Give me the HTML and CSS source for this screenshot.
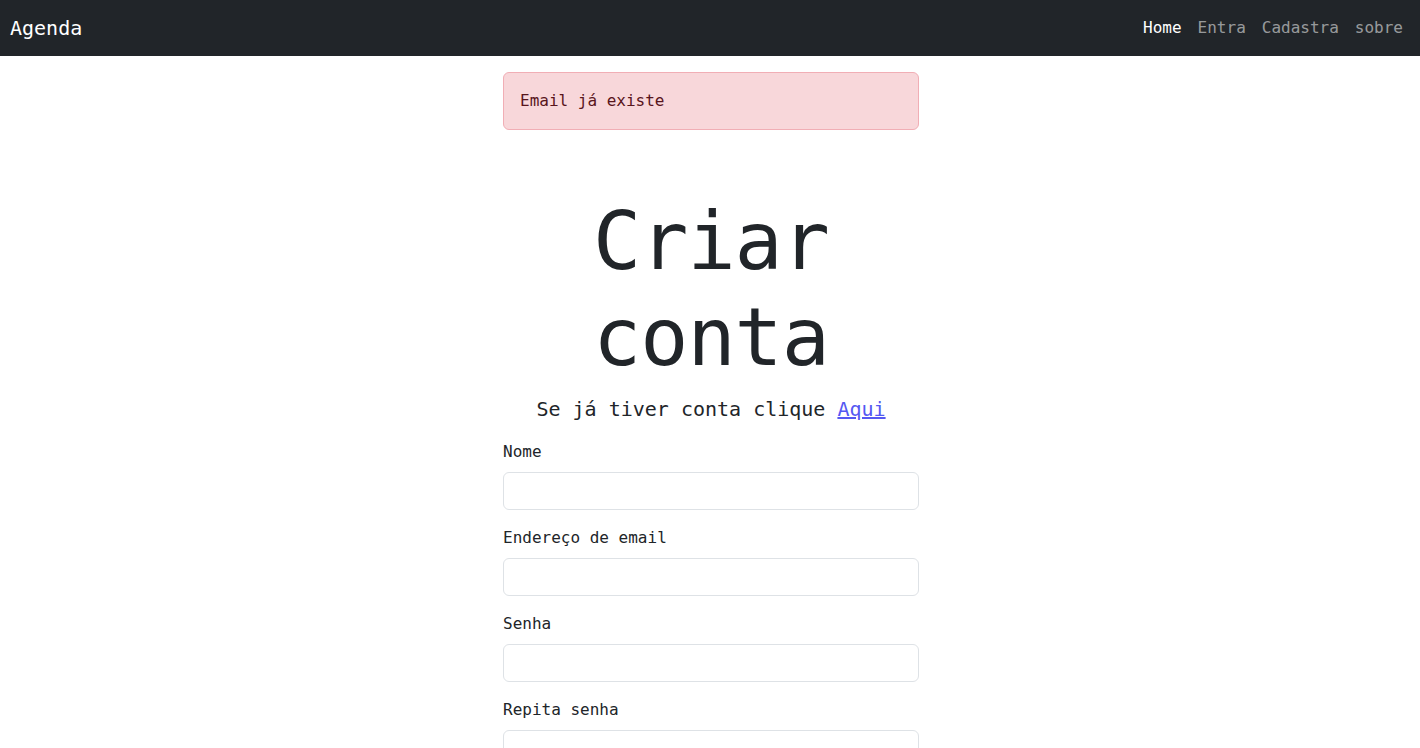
FILE: index.html
```html
<!DOCTYPE html>
<html lang="pt-BR">
<head>
<meta charset="utf-8">
<title>Agenda</title>
<link rel="stylesheet" href="styles.css">
</head>
<body>
<nav class="navbar">
  <a class="brand" href="#">Agenda</a>
  <ul class="nav-links">
    <li><a class="nav-link active" href="#">Home</a></li>
    <li><a class="nav-link" href="#">Entra</a></li>
    <li><a class="nav-link" href="#">Cadastra</a></li>
    <li><a class="nav-link" href="#">sobre</a></li>
  </ul>
</nav>
<main class="container">
  <div class="alert">Email já existe</div>
  <h1 class="title">Criar conta</h1>
  <p class="lead">Se já tiver conta clique <a href="#">Aqui</a></p>
  <form class="form">
    <div class="field">
      <label for="nome">Nome</label>
      <input id="nome" type="text">
    </div>
    <div class="field">
      <label for="email">Endereço de email</label>
      <input id="email" type="email">
    </div>
    <div class="field">
      <label for="senha">Senha</label>
      <input id="senha" type="password">
    </div>
    <div class="field">
      <label for="senha2">Repita senha</label>
      <input id="senha2" type="password">
    </div>
  </form>
</main>
</body>
</html>
```
FILE: styles.css
```css
* { box-sizing: border-box; }
html, body { margin: 0; padding: 0; }
body {
  font-family: "DejaVu Sans Mono", "Liberation Mono", monospace;
  font-size: 16px;
  line-height: 1.5;
  color: #212529;
  background: #fff;
}
.navbar {
  background: #212529;
  height: 56px;
  display: flex;
  align-items: center;
  justify-content: space-between;
  padding: 8px 9px 8px 10px;
}
.brand {
  color: #fff;
  text-decoration: none;
  font-size: 20px;
  line-height: 30px;
}
.nav-links {
  list-style: none;
  margin: 0;
  padding: 0;
  display: flex;
}
.nav-link {
  display: block;
  padding: 8px 8px;
  color: rgba(255, 255, 255, 0.55);
  text-decoration: none;
  font-size: 16px;
}
.nav-link.active { color: #fff; }
.container {
  width: 416px;
  margin: 0 auto;
  padding-top: 16px;
  position: relative;
  left: 1px;
}
.alert {
  background: #f8d7da;
  border: 1px solid #f1aeb5;
  color: #58151c;
  border-radius: 6px;
  padding: 16px;
  margin-bottom: 16px;
}
.title {
  margin: 64px 0 8px;
  font-size: 80px;
  font-weight: 300;
  line-height: 1.2;
  text-align: center;
  letter-spacing: -1px;
}
.lead {
  margin: 0 0 16px;
  font-size: 20px;
  line-height: 30px;
  text-align: center;
}
.lead a { color: #5558f2; }
.field { margin-bottom: 16px; }
.field label {
  display: block;
  margin-bottom: 8px;
  font-size: 16px;
  line-height: 24px;
}
.field input {
  display: block;
  width: 100%;
  height: 38px;
  border: 1px solid #dee2e6;
  border-radius: 6px;
  padding: 6px 12px;
  font: inherit;
  background: #fff;
}
```
